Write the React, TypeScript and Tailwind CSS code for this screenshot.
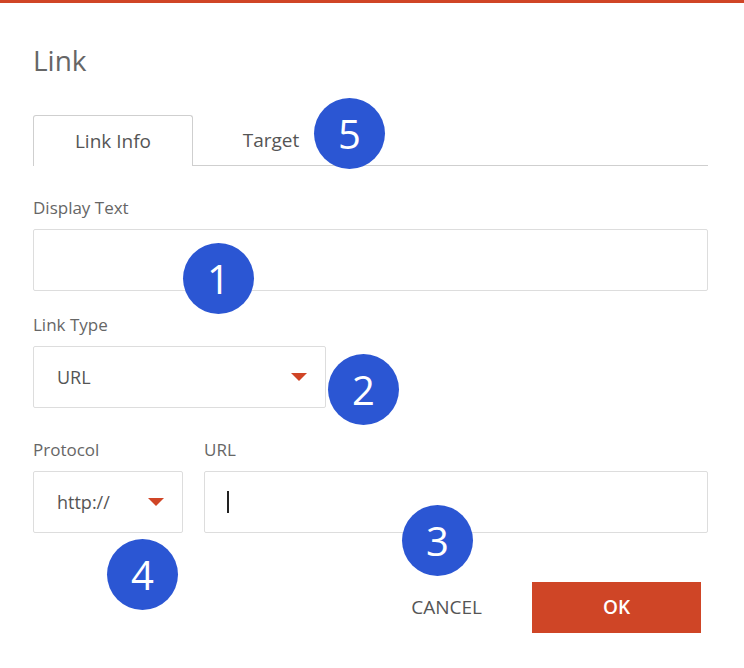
import React from 'react';

const font = { fontFamily: '"Open Sans", "Noto Sans", sans-serif' };

const Badge: React.FC<{ n: number; className: string }> = ({ n, className }) => (
  <div
    className={`absolute w-[71px] h-[71px] rounded-full bg-[#2b56d3] text-white flex items-center justify-center text-[40px] leading-none ${className}`}
  >
    {n}
  </div>
);

const Caret: React.FC = () => (
  <svg width="16" height="8" viewBox="0 0 16 8" className="shrink-0">
    <polygon points="0,0 16,0 8,8" fill="#d04526" />
  </svg>
);

const App: React.FC = () => {
  return (
    <div className="relative w-[744px] h-[668px] bg-white overflow-hidden" style={font}>
      <div className="h-[3px] bg-[#d04526]" />

      <div className="pl-[33px] pr-[36px]">
        {/* 标题 */}
        <h1 className="mt-[38px] text-[28px] leading-[38px] text-[#666]">Link</h1>

        {/* 标签页 */}
        <div className="mt-[36px] flex items-end h-[51px] border-b border-[#cfcfcf]">
          <div className="w-[160px] h-[51px] -mb-px flex items-center justify-center bg-white border border-b-0 border-[#cfcfcf] rounded-t-[3px] text-[19px] text-[#555]">
            Link Info
          </div>
          <div className="w-[156px] h-[50px] flex items-center justify-center text-[19px] text-[#555]">
            Target
          </div>
        </div>

        {/* 显示文本 */}
        <div className="mt-[32px] text-[17px] leading-[20px] text-[#666]">Display Text</div>
        <div className="mt-[11px] h-[62px] border border-[#ddd] rounded-[2px]" />

        {/* 链接类型 */}
        <div className="mt-[24px] text-[17px] leading-[20px] text-[#666]">Link Type</div>
        <div className="mt-[11px] w-[293px] h-[62px] border border-[#ddd] rounded-[2px] flex items-center justify-between pl-[23px] pr-[18px]">
          <span className="text-[18px] text-[#555]">URL</span>
          <Caret />
        </div>

        {/* 协议 / URL */}
        <div className="mt-[32px] flex gap-[21px]">
          <div className="w-[150px]">
            <div className="text-[17px] leading-[20px] text-[#666]">Protocol</div>
            <div className="mt-[11px] h-[62px] border border-[#ddd] rounded-[2px] flex items-center justify-between pl-[23px] pr-[18px]">
              <span className="text-[18px] text-[#555]">http://</span>
              <Caret />
            </div>
          </div>
          <div className="flex-1">
            <div className="text-[17px] leading-[20px] text-[#666]">URL</div>
            <div className="mt-[11px] h-[62px] border border-[#ddd] rounded-[2px] flex items-center pl-[22px]">
              <div className="w-[2px] h-[22px] bg-[#222]" />
            </div>
          </div>
        </div>

        {/* 按钮 */}
        <div className="mt-[49px] flex justify-end items-center gap-[50px] pr-[7px]">
          <button className="text-[19px] text-[#555]">CANCEL</button>
          <button className="w-[169px] h-[51px] bg-[#cf4526] text-white text-[19px] font-semibold">OK</button>
        </div>
      </div>

      <Badge n={5} className="left-[314px] top-[98px]" />
      <Badge n={1} className="left-[183px] top-[243px]" />
      <Badge n={2} className="left-[328px] top-[354px]" />
      <Badge n={3} className="left-[402px] top-[505px]" />
      <Badge n={4} className="left-[107px] top-[539px]" />
    </div>
  );
};

export default App;
